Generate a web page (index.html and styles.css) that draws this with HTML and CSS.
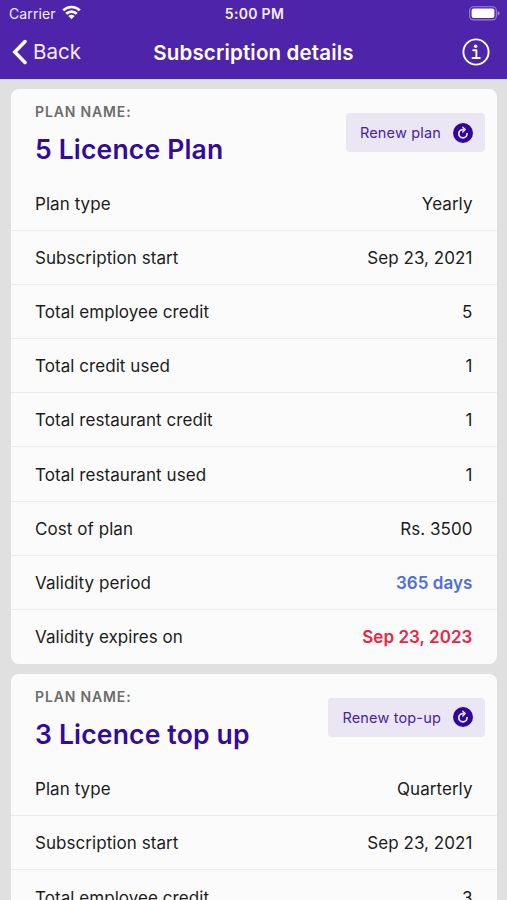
FILE: index.html
```html
<!DOCTYPE html>
<html lang="en">
<head>
<meta charset="utf-8">
<title>Subscription details</title>
<link rel="stylesheet" href="styles.css">
</head>
<body>
<header class="top">
  <div class="status">
    <div class="carrier"><span class="carrier-name">Carrier</span>
      <svg width="19" height="15" viewBox="0 0 19 15" fill="none" stroke="#fff" stroke-width="2.7"><path d="M1.2 5.4a11.8 11.8 0 0 1 16.6 0M4.2 8.7a7.6 7.6 0 0 1 10.6 0"/><path d="M9.5 14.2 6.4 11.1a4.5 4.5 0 0 1 6.2 0Z" fill="#fff" stroke="none"/></svg>
    </div>
    <span class="time">5:00 PM</span>
    <svg class="battery" width="31" height="15" viewBox="0 0 31 15"><rect x=".7" y=".7" width="26.6" height="13.2" rx="3.7" fill="none" stroke="#9d83d2" stroke-width="1.1"/><rect x="2.6" y="2.6" width="22.8" height="9.4" rx="2" fill="#fff"/><path d="M28.6 4.8q2.2 1 2 2.5 0 1.5-2 2.5Z" fill="#9d83d2"/></svg>
  </div>
  <nav class="nav">
    <div class="back"><svg width="16" height="26" viewBox="0 0 16 26" fill="none" stroke="#fff" stroke-width="3.5" stroke-linecap="round" stroke-linejoin="miter"><path d="M14 2.5 3.8 13 14 23.5"/></svg><span class="back-label">Back</span></div>
    <h1 class="title">Subscription details</h1>
    <svg class="info" width="28" height="28" viewBox="0 0 28 28" fill="none" stroke="#fff"><circle cx="14" cy="14" r="12.6" stroke-width="1.9"/><circle cx="13.6" cy="8.3" r="1.8" fill="#fff" stroke="none"/><path d="M11.2 12.3h3.2v7.6M10.5 20h7.3" stroke-width="1.9" stroke-linecap="round" stroke-linejoin="round"/></svg>
  </nav>
</header>
<main class="list">
  <section class="card">
    <div class="head">
      <div><div class="label">PLAN NAME:</div><h2 class="name">5 Licence Plan</h2></div>
      <div class="renew"><span>Renew plan</span><svg width="20" height="20" viewBox="0 0 20 20" fill="none"><circle cx="10" cy="10" r="10" fill="#310797"/><path d="M14 10.7a4.1 4.1 0 1 1-4.1-4.1h1" stroke="#eee8fa" stroke-width="1.7" stroke-linecap="round"/><path d="m9.800 4.300 2.400 2.300-2.400 2.300" stroke="#eee8fa" stroke-width="1.4" stroke-linecap="round" stroke-linejoin="round"/></svg></div>
    </div>
    <div class="row"><span>Plan type</span><span>Yearly</span></div>
    <div class="row"><span>Subscription start</span><span>Sep 23, 2021</span></div>
    <div class="row"><span>Total employee credit</span><span>5</span></div>
    <div class="row"><span>Total credit used</span><span>1</span></div>
    <div class="row"><span>Total restaurant credit</span><span>1</span></div>
    <div class="row"><span>Total restaurant used</span><span>1</span></div>
    <div class="row"><span>Cost of plan</span><span>Rs. 3500</span></div>
    <div class="row"><span>Validity period</span><span class="days">365 days</span></div>
    <div class="row"><span>Validity expires on</span><span class="expiry">Sep 23, 2023</span></div>
  </section>
  <section class="card">
    <div class="head">
      <div><div class="label">PLAN NAME:</div><h2 class="name">3 Licence top up</h2></div>
      <div class="renew"><span>Renew top-up</span><svg width="20" height="20" viewBox="0 0 20 20" fill="none"><circle cx="10" cy="10" r="10" fill="#310797"/><path d="M14 10.7a4.1 4.1 0 1 1-4.1-4.1h1" stroke="#eee8fa" stroke-width="1.7" stroke-linecap="round"/><path d="m9.800 4.300 2.400 2.300-2.400 2.300" stroke="#eee8fa" stroke-width="1.4" stroke-linecap="round" stroke-linejoin="round"/></svg></div>
    </div>
    <div class="row"><span>Plan type</span><span>Quarterly</span></div>
    <div class="row"><span>Subscription start</span><span>Sep 23, 2021</span></div>
    <div class="row"><span>Total employee credit</span><span>3</span></div>
  </section>
</main>
</body>
</html>
```
FILE: styles.css
```css
* { box-sizing: border-box; }
body {
  margin: 0;
  height: 900px;
  overflow: hidden;
  background: #e0e0e0;
  color: #1c1c1c;
  font-family: Inter, "Liberation Sans", sans-serif;
}
h1, h2 { margin: 0; }
svg { display: block; flex: none; }
.top {
  height: 80px;
  background: #4e24aa;
  border-bottom: 1px solid #d9d0ea;
  color: #f3edfb;
}
.status {
  display: grid;
  grid-template-columns: 1fr auto 1fr;
  align-items: center;
  height: 27px;
  padding: 0 7px 0 9px;
  font-size: 14px;
}
.carrier { display: flex; align-items: center; gap: 6px; }
.carrier svg { margin-top: -2px; }
.carrier-name { font-size: 14px; letter-spacing: 0.1px; }
.time { font-weight: 600; font-size: 14px; letter-spacing: 0.3px; }
.battery { justify-self: end; margin-top: -1px; }
.nav {
  display: grid;
  grid-template-columns: 1fr auto 1fr;
  align-items: center;
  height: 50px;
  padding: 0 11px;
}
.back { display: flex; align-items: center; gap: 6px; font-size: 20.5px; line-height: 24px; }
.back-label { margin-top: -1px; }
.title {
  font-size: 20.5px;
  font-weight: 600;
  line-height: 26px;
  letter-spacing: 0.17px;
  margin-top: 1px;
  color: #fff;
}
.info { justify-self: end; margin-right: 6px; }
.list {
  display: flex;
  flex-direction: column;
  gap: 10px;
  padding: 9px 10px 0 11px;
}
.card { background: #fbfbfb; border-radius: 8px; }
.head {
  display: flex;
  justify-content: space-between;
  align-items: flex-start;
  height: 88px;
  padding: 13px 12px 0 24px;
}
.label {
  font-size: 14px;
  line-height: 20px;
  font-weight: 600;
  letter-spacing: 0.85px;
  color: #6c6c6c;
}
.name {
  margin-top: 10px;
  font-size: 26.5px;
  line-height: 34px;
  font-weight: 600;
  letter-spacing: 0.18px;
  color: #330b9c;
}
.renew {
  display: flex;
  align-items: center;
  gap: 12px;
  height: 39px;
  margin-top: 11px;
  padding: 0 12px 0 14px;
  border-radius: 4px;
  background: #ebe6f4;
  color: #4a22a4;
  font-size: 14.5px;
  letter-spacing: 0.17px;
}
.row {
  display: flex;
  justify-content: space-between;
  align-items: center;
  height: 54.1px;
  padding: 1px 24.5px 0 24px;
  border-bottom: 1px solid #ebebeb;
  font-size: 17px;
  letter-spacing: 0.06px;
}
.row:last-child { border-bottom: 0; }
.days { color: #4d6ee0; font-weight: 600; }
.expiry { color: #eb2442; font-weight: 600; }
```
